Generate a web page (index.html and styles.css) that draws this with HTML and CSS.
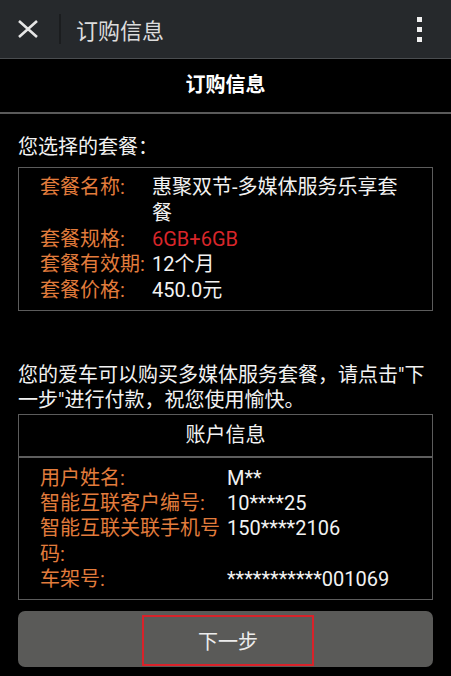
FILE: index.html
```html
<!DOCTYPE html>
<html lang="zh-CN">
<head>
<meta charset="utf-8">
<title>订购信息</title>
<link rel="stylesheet" href="styles.css">
</head>
<body>
<div class="topbar">
  <svg class="close" width="20" height="18" viewBox="0 0 20 18"><path d="M1 1 L19 17 M19 1 L1 17" stroke="#e6e6e6" stroke-width="2.6" fill="none"/></svg>
  <div class="vsep"></div>
  <div class="apptitle">订购信息</div>
  <div class="dots"><span></span><span></span><span></span></div>
</div>
<div class="pagehead">订购信息</div>
<div class="content">
  <div class="intro">您选择的套餐：</div>
  <div class="box pkg">
    <div class="row"><div class="lbl">套餐名称:</div><div class="val">惠聚双节-多媒体服务乐享套餐</div></div>
    <div class="row"><div class="lbl">套餐规格:</div><div class="val red">6GB+6GB</div></div>
    <div class="row"><div class="lbl">套餐有效期:</div><div class="val">12个月</div></div>
    <div class="row"><div class="lbl">套餐价格:</div><div class="val">450.0元</div></div>
  </div>
  <div class="note">您的爱车可以购买多媒体服务套餐，请点击"下一步"进行付款，祝您使用愉快。</div>
  <div class="box acct">
    <div class="acct-head">账户信息</div>
    <div class="acct-body">
      <div class="row"><div class="lbl">用户姓名:</div><div class="val">M**</div></div>
      <div class="row"><div class="lbl">智能互联客户编号:</div><div class="val">10****25</div></div>
      <div class="row"><div class="lbl">智能互联关联手机号码:</div><div class="val">150****2106</div></div>
      <div class="row"><div class="lbl">车架号:</div><div class="val">***********001069</div></div>
    </div>
  </div>
  <div class="btn"><div class="btn-inner">下一步</div></div>
</div>
</body>
</html>
```
FILE: styles.css
```css
html, body {
  margin: 0;
  padding: 0;
  background: #000;
}
body {
  width: 451px;
  height: 676px;
  overflow: hidden;
  font-family: Roboto, "Noto Sans CJK SC", sans-serif;
  color: #f2f2f2;
  font-size: 20px;
}
.topbar {
  height: 58px;
  background: #26292c;
  border-bottom: 1px solid #4a4d50;
  display: flex;
  align-items: center;
}
.close {
  margin-left: 18px;
  display: block;
}
.vsep {
  width: 2px;
  height: 30px;
  background: #1b1d1f;
  margin-left: 21px;
}
.apptitle {
  margin-left: 15px;
  font-size: 22px;
  color: #dcdcdc;
  font-family: "Noto Sans CJK SC", sans-serif;
  line-height: 1;
}
.dots {
  margin-left: auto;
  margin-right: 29px;
  display: flex;
  flex-direction: column;
  gap: 5px;
}
.dots span {
  display: block;
  width: 5px;
  height: 5px;
  background: #f0f0f0;
}
.pagehead {
  height: 53px;
  line-height: 53px;
  text-align: center;
  font-weight: bold;
  font-size: 20px;
  color: #fff;
  border-bottom: 2px solid #5a5a5a;
}
.content {
  padding: 0 18px;
}
.intro {
  margin-top: 20px;
  line-height: 26px;
}
.box {
  border: 1px solid #5c5c5c;
}
.pkg {
  margin-top: 7px;
  padding: 7px 20px 6px 21px;
}
.row {
  display: flex;
  line-height: 25.75px;
}
.lbl {
  color: #e27c3c;
  flex: none;
}
.pkg .lbl {
  width: 112px;
}
.val {
  flex: 1;
  color: #f2f2f2;
}
.red {
  color: #d8262a;
}
.note {
  margin-top: 52px;
  line-height: 25.5px;
}
.acct-head {
  height: 41px;
  line-height: 41px;
  text-align: center;
  border-bottom: 2px solid #5e5e5e;
}
.acct-body {
  padding: 8px 20px 7px 21px;
}
.acct-body .row {
  line-height: 25.25px;
}
.acct-body .lbl {
  width: 187px;
}
.btn {
  margin-top: 11px;
  height: 56px;
  box-sizing: border-box;
  padding: 4px 0 1px 5px;
  background: #5a5a58;
  border-radius: 7px;
  display: flex;
  justify-content: center;
}
.btn-inner {
  width: 172px;
  box-sizing: border-box;
  border: 2px solid #d8222a;
  display: flex;
  align-items: center;
  justify-content: center;
  color: #ececec;
  font-size: 20px;
}
```
